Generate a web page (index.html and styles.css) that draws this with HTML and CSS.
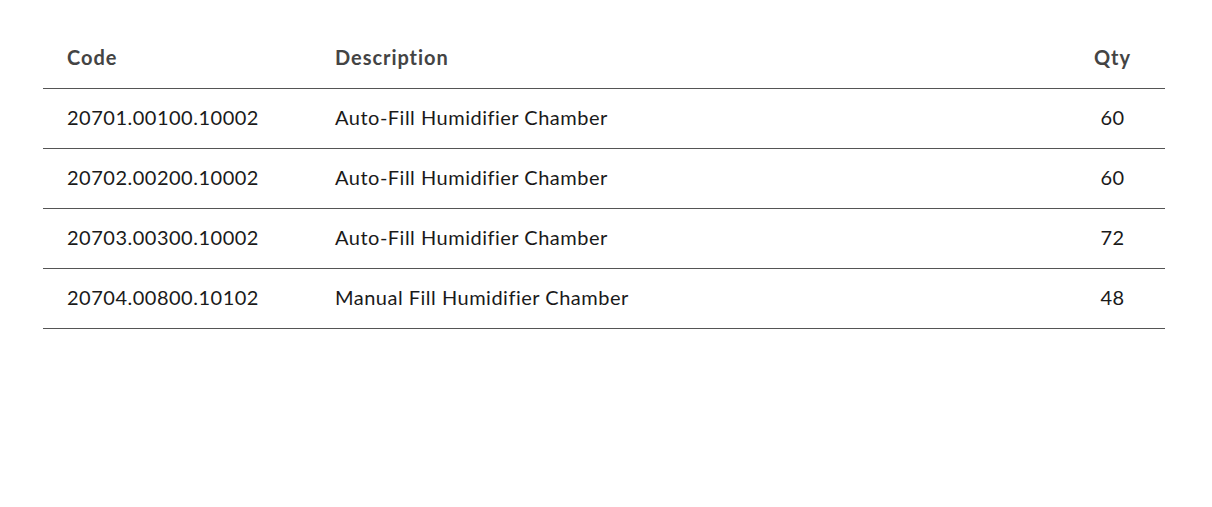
FILE: index.html
```html
<!DOCTYPE html>
<html>
<head>
<meta charset="utf-8">
<link rel="stylesheet" href="styles.css">
</head>
<body>
<table class="parts">
  <thead>
    <tr><th class="code">Code</th><th class="desc">Description</th><th class="qty">Qty</th></tr>
  </thead>
  <tbody>
    <tr><td class="code">20701.00100.10002</td><td class="desc">Auto-Fill Humidifier Chamber</td><td class="qty">60</td></tr>
    <tr><td class="code">20702.00200.10002</td><td class="desc">Auto-Fill Humidifier Chamber</td><td class="qty">60</td></tr>
    <tr><td class="code">20703.00300.10002</td><td class="desc">Auto-Fill Humidifier Chamber</td><td class="qty">72</td></tr>
    <tr><td class="code">20704.00800.10102</td><td class="desc">Manual Fill Humidifier Chamber</td><td class="qty">48</td></tr>
  </tbody>
</table>
</body>
</html>
```
FILE: styles.css
```css
html, body {
  margin: 0;
  padding: 0;
  background: #fff;
}
body {
  padding: 29px 47px 0 43px;
  font-family: "Lato", "Liberation Sans", sans-serif;
}
.parts {
  width: 1122px;
  border-collapse: collapse;
  table-layout: fixed;
}
.parts th, .parts td {
  height: 56px;
  padding: 0 0 3px 0;
  border-bottom: 1px solid #555;
  vertical-align: middle;
  text-align: left;
  white-space: nowrap;
}
.parts th {
  font-weight: 700;
  font-size: 20px;
  letter-spacing: 0.95px;
  color: #444;
}
.parts td {
  font-weight: 400;
  font-size: 20px;
  letter-spacing: 0.5px;
  color: #1a1a1a;
}
.parts .code {
  width: 268px;
  padding-left: 24px;
}
.parts .qty {
  width: 105px;
  text-align: center;
}
```
